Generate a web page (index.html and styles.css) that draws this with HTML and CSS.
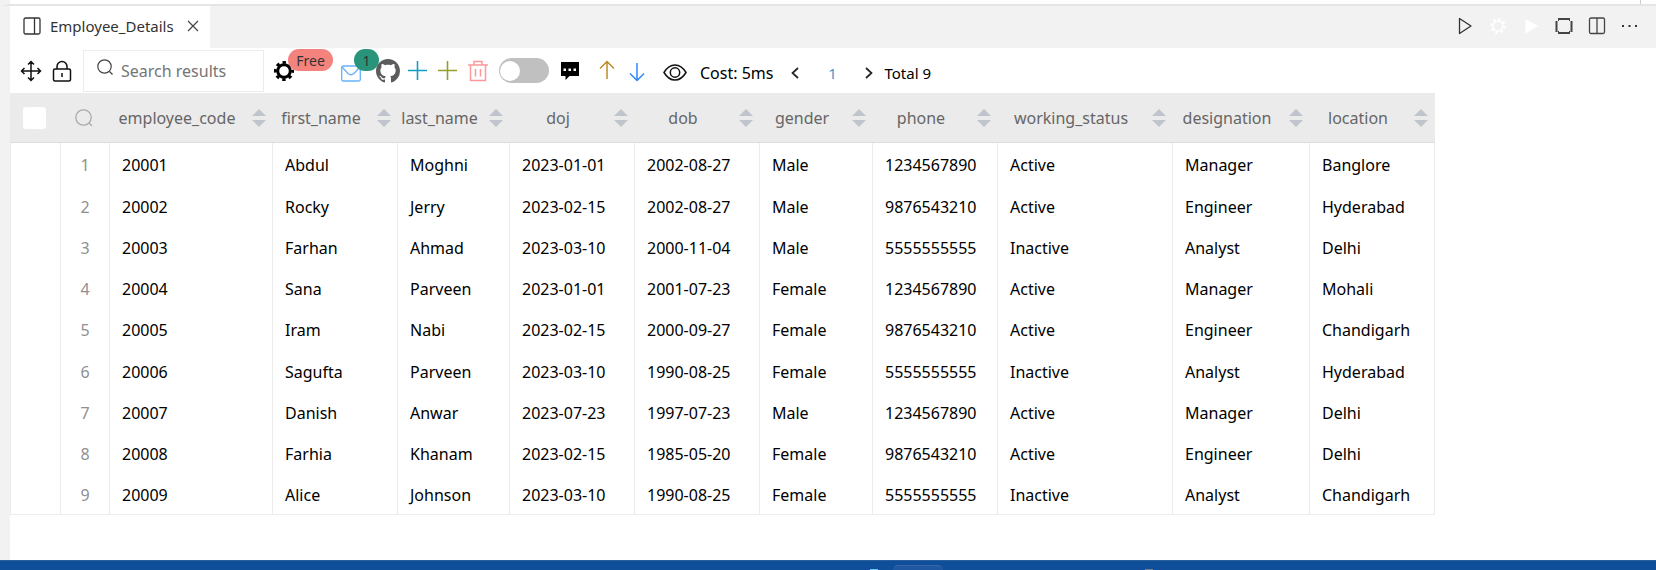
FILE: index.html
```
<!DOCTYPE html>
<html lang="en">
<head>
<meta charset="utf-8">
<title>Employee_Details</title>
<link rel="stylesheet" href="styles.css">
</head>
<body>
<div class="top-strip"><span class="top-divider"></span></div>
<main class="workspace">
  <header class="tabbar">
    <div class="tab">
      <svg class="tab-icon" width="18" height="18" viewBox="0 0 18 18" fill="none" stroke="#333" stroke-width="1.3"><rect x="1" y="1" width="16" height="16" rx="1.5"/><path d="M11.500 1v16"/></svg>
      <span class="tab-title">Employee_Details</span>
      <button class="icon-btn" type="button" aria-label="Close tab"><svg width="12" height="12" viewBox="0 0 12 12" fill="none" stroke="#444" stroke-width="1.2"><path d="M1 1l10 10M11 1L1 11"/></svg></button>
    </div>
    <div class="tab-actions">
      <button class="icon-btn" type="button" aria-label="Run"><svg width="18" height="18" viewBox="0 0 18 18" fill="none" stroke="#333" stroke-width="1.3" stroke-linejoin="round"><path d="M3.500 1.500v15L15 9z"/></svg></button>
      <button class="icon-btn" type="button" aria-label="Settings"><svg width="18" height="18" viewBox="0 0 18 18" fill="none" stroke="#fff"><circle cx="9" cy="9" r="5" stroke-width="1.500"/><circle cx="9" cy="9" r="6.700" stroke-width="2.200" stroke-dasharray="2.600 2.660"/></svg></button>
      <button class="icon-btn" type="button" aria-label="Execute"><svg width="18" height="18" viewBox="0 0 18 18" fill="#fff"><path d="M3.500 2v14.500L16 9z"/></svg></button>
      <button class="icon-btn" type="button" aria-label="Frame"><svg width="18" height="18" viewBox="0 0 18 18" fill="none" stroke="#444" stroke-width="2"><path d="M3 2h12M3 16h12M1.500 4v11M16.500 4v11"/><path d="M3.500 3v1M14.500 3v1M3.500 14v1M14.500 14v1" stroke-width="1"/></svg></button>
      <button class="icon-btn" type="button" aria-label="Split editor"><svg width="18" height="18" viewBox="0 0 18 18" fill="none" stroke="#444" stroke-width="1.300"><rect x="1.500" y="1" width="15" height="15.500" rx="1.500"/><path d="M9 1v15.500"/></svg></button>
      <button class="icon-btn" type="button" aria-label="More"><svg width="18" height="18" viewBox="0 0 18 18" fill="#333"><rect x="1" y="8" width="2" height="2"/><rect x="7.500" y="8" width="2" height="2"/><rect x="14" y="8" width="2" height="2"/></svg></button>
    </div>
  </header>

  <section class="toolbar">
    <button class="icon-btn" type="button" aria-label="Move"><svg width="22" height="22" viewBox="0 0 22 22" fill="none" stroke="#111" stroke-width="1.500"><path d="M1.500 11h19M11 1.500v19M4.500 8l-3 3 3 3M17.500 8l3 3-3 3M8 4.500l3-3 3 3M8 17.500l3 3 3-3"/></svg></button>
    <button class="icon-btn" type="button" aria-label="Lock"><svg width="20" height="22" viewBox="0 0 20 22" fill="none" stroke="#111" stroke-width="1.500"><rect x="1.500" y="9" width="17" height="12" rx="1.500"/><path d="M5 9V6.500a5 5 0 0 1 10 0V9M10 13v4"/></svg></button>
    <label class="search">
      <svg width="16" height="17" viewBox="0 0 16 17" fill="none" stroke="#444" stroke-width="1.200"><circle cx="7.500" cy="7.500" r="6.700"/><path d="M12.500 12.500l3 3"/></svg>
      <input class="search-input" type="text" placeholder="Search results" aria-label="Search results">
    </label>
    <button class="icon-btn badged" type="button" aria-label="Free plan settings"><svg width="20" height="20" viewBox="0 0 20 20" fill="none" stroke="#000"><circle cx="10" cy="10" r="6.300" stroke-width="3"/><circle cx="10" cy="10" r="8.600" stroke-width="2.800" stroke-dasharray="3.400 3.355" stroke-dashoffset="1.700"/></svg><span class="badge badge-free">Free</span></button>
    <button class="icon-btn badged mail" type="button" aria-label="Messages"><svg width="20" height="20" viewBox="0 0 20 20" fill="none" stroke="#66b1ff" stroke-width="1.300"><rect x=".7" y="5" width="18.600" height="15" rx="1.500"/><path d="M1 6l6 6.500q3 2.500 6 0L19 6"/></svg><span class="badge badge-count">1</span></button>
    <button class="icon-btn github" type="button" aria-label="GitHub"><svg width="24" height="24" viewBox="0 0 16 16" fill="#5c5c5c"><path d="M8 0C3.580 0 0 3.580 0 8c0 3.540 2.290 6.530 5.470 7.590.4.070.55-.17.55-.38 0-.19-.01-.82-.01-1.490-2.010.37-2.530-.49-2.690-.94-.09-.23-.48-.94-.82-1.130-.28-.15-.68-.52-.01-.53.63-.01 1.080.58 1.230.82.72 1.210 1.870.87 2.330.66.070-.52.28-.87.51-1.070-1.780-.2-3.640-.89-3.640-3.950 0-.87.31-1.590.82-2.150-.08-.2-.36-1.020.08-2.120 0 0 .67-.21 2.200.82.64-.18 1.320-.27 2-.27s1.360.09 2 .27c1.530-1.040 2.200-.82 2.200-.82.44 1.100.16 1.920.08 2.120.51.56.82 1.270.82 2.150 0 3.070-1.870 3.750-3.650 3.950.29.25.54.73.54 1.480 0 1.070-.01 1.930-.01 2.200 0 .21.15.46.55.38A8.010 8.010 0 0 0 16 8c0-4.420-3.580-8-8-8z"/></svg></button>
    <button class="icon-btn" type="button" aria-label="Insert row"><svg width="20" height="20" viewBox="0 0 20 20" stroke="#109fc6" stroke-width="1.600"><path d="M0 9.500h19M9.500 0v19"/></svg></button>
    <button class="icon-btn" type="button" aria-label="Add column"><svg width="20" height="20" viewBox="0 0 20 20" stroke="#94a02a" stroke-width="1.600"><path d="M0 9.500h19M9.500 0v19"/></svg></button>
    <button class="icon-btn" type="button" aria-label="Delete"><svg width="20" height="22" viewBox="0 0 20 22" fill="none" stroke="#f99" stroke-width="1.500"><path d="M0 5h20M6 5V1.500h8V5M2.500 5v15.500h15V5M7.500 9v7.500M12.500 9v7.500"/></svg></button>
    <input class="switch" type="checkbox" role="switch" aria-label="Read only">
    <button class="icon-btn chat" type="button" aria-label="Comment"><svg width="18" height="20" viewBox="0 0 18 20"><path d="M0 1h18v14H8.500L4.500 19v-4H0z" fill="#000"/><path d="M2.500 7.500h2.500v2.500H2.500zM7.500 7.500H10v2.500H7.500zM12.500 7.500H15v2.500h-2.500z" fill="#fff"/></svg></button>
    <button class="icon-btn export" type="button" aria-label="Move up"><svg width="20" height="20" viewBox="0 0 20 20" fill="none" stroke="#bd8a28" stroke-width="1.500"><path d="M10 .5V18M3 7.500l7-7 7 7"/></svg></button>
    <button class="icon-btn" type="button" aria-label="Move down"><svg width="20" height="20" viewBox="0 0 20 20" fill="none" stroke="#2f86ff" stroke-width="1.500"><path d="M10 2v17.500M3 12.500l7 7 7-7"/></svg></button>
    <button class="icon-btn eye" type="button" aria-label="View"><svg width="24" height="18" viewBox="0 0 24 18" fill="none" stroke="#111" stroke-width="1.500"><path d="M1 10.500Q5.500 3 12 3t11 7.500Q18.500 18 12 18T1 10.500z"/><circle cx="12" cy="10.500" r="4.700"/></svg></button>
    <span class="cost">Cost: 5ms</span>
    <nav class="pager" aria-label="Pages">
      <button class="icon-btn" type="button" aria-label="Previous page"><svg width="8" height="12" viewBox="0 0 8 12" fill="none" stroke="#222" stroke-width="1.700"><path d="M7 1L1.500 6 7 11"/></svg></button>
      <button class="page" type="button">1</button>
      <button class="icon-btn" type="button" aria-label="Next page"><svg width="8" height="12" viewBox="0 0 8 12" fill="none" stroke="#222" stroke-width="1.700"><path d="M1 1l5.500 5L1 11"/></svg></button>
      <span class="total">Total 9</span>
    </nav>
  </section>

  <table class="grid">
    <colgroup><col class="w-check"><col class="w-index"><col class="w-code"><col class="w-mid"><col class="w-last"><col class="w-mid"><col class="w-mid"><col class="w-gender"><col class="w-mid"><col class="w-status"><col class="w-role"><col class="w-mid"></colgroup>
    <thead>
      <tr>
        <th class="center"><input class="check" type="checkbox" aria-label="Select all rows"></th>
        <th class="center"><svg class="find" width="18" height="18" viewBox="0 0 18 18" fill="none" stroke="#aaa" stroke-width="1.300"><circle cx="8.500" cy="8.500" r="7.700"/><path d="M14 14l3 3"/></svg></th>
        <th><span class="name">employee_code</span><button class="sort" type="button" aria-label="Sort"></button></th>
        <th><span class="name">first_name</span><button class="sort" type="button" aria-label="Sort"></button></th>
        <th><span class="name">last_name</span><button class="sort" type="button" aria-label="Sort"></button></th>
        <th><span class="name">doj</span><button class="sort" type="button" aria-label="Sort"></button></th>
        <th><span class="name">dob</span><button class="sort" type="button" aria-label="Sort"></button></th>
        <th><span class="name">gender</span><button class="sort" type="button" aria-label="Sort"></button></th>
        <th><span class="name">phone</span><button class="sort" type="button" aria-label="Sort"></button></th>
        <th><span class="name">working_status</span><button class="sort" type="button" aria-label="Sort"></button></th>
        <th><span class="name">designation</span><button class="sort" type="button" aria-label="Sort"></button></th>
        <th><span class="name">location</span><button class="sort" type="button" aria-label="Sort"></button></th>
      </tr>
    </thead>
    <tbody>
      <tr><td></td><td class="index">1</td><td>20001</td><td>Abdul</td><td>Moghni</td><td>2023-01-01</td><td>2002-08-27</td><td>Male</td><td>1234567890</td><td>Active</td><td>Manager</td><td>Banglore</td></tr>
      <tr><td></td><td class="index">2</td><td>20002</td><td>Rocky</td><td>Jerry</td><td>2023-02-15</td><td>2002-08-27</td><td>Male</td><td>9876543210</td><td>Active</td><td>Engineer</td><td>Hyderabad</td></tr>
      <tr><td></td><td class="index">3</td><td>20003</td><td>Farhan</td><td>Ahmad</td><td>2023-03-10</td><td>2000-11-04</td><td>Male</td><td>5555555555</td><td>Inactive</td><td>Analyst</td><td>Delhi</td></tr>
      <tr><td></td><td class="index">4</td><td>20004</td><td>Sana</td><td>Parveen</td><td>2023-01-01</td><td>2001-07-23</td><td>Female</td><td>1234567890</td><td>Active</td><td>Manager</td><td>Mohali</td></tr>
      <tr><td></td><td class="index">5</td><td>20005</td><td>Iram</td><td>Nabi</td><td>2023-02-15</td><td>2000-09-27</td><td>Female</td><td>9876543210</td><td>Active</td><td>Engineer</td><td>Chandigarh</td></tr>
      <tr><td></td><td class="index">6</td><td>20006</td><td>Sagufta</td><td>Parveen</td><td>2023-03-10</td><td>1990-08-25</td><td>Female</td><td>5555555555</td><td>Inactive</td><td>Analyst</td><td>Hyderabad</td></tr>
      <tr><td></td><td class="index">7</td><td>20007</td><td>Danish</td><td>Anwar</td><td>2023-07-23</td><td>1997-07-23</td><td>Male</td><td>1234567890</td><td>Active</td><td>Manager</td><td>Delhi</td></tr>
      <tr><td></td><td class="index">8</td><td>20008</td><td>Farhia</td><td>Khanam</td><td>2023-02-15</td><td>1985-05-20</td><td>Female</td><td>9876543210</td><td>Active</td><td>Engineer</td><td>Delhi</td></tr>
      <tr><td></td><td class="index">9</td><td>20009</td><td>Alice</td><td>Johnson</td><td>2023-03-10</td><td>1990-08-25</td><td>Female</td><td>5555555555</td><td>Inactive</td><td>Analyst</td><td>Chandigarh</td></tr>
    </tbody>
  </table>
</main>
<footer class="taskbar"><span class="dot dot-blue"></span><span class="active-app"></span><span class="dot dot-gray"></span></footer>
</body>
</html>
```

FILE: styles.css
```
* { box-sizing: border-box; }

body {
  margin: 0;
  min-height: 100vh;
  display: flex;
  flex-direction: column;
  background: #fff;
  color: #000;
  font-family: "Noto Sans", "Open Sans", sans-serif;
  font-size: 16px;
  overflow: hidden;
}

button {
  padding: 0;
  border: 0;
  background: none;
  font: inherit;
  color: inherit;
}

svg { display: block; overflow: visible; }

.top-strip {
  display: flex;
  justify-content: flex-end;
  height: 6px;
  padding-right: 15px;
  border-bottom: 2px solid #e5e5e5;
  border-left: 10px solid #f2f2f2;
}

.top-divider { width: 1px; background: #ccc; }

.workspace {
  flex: 1;
  border-left: 10px solid #f2f2f2;
}

.tabbar {
  display: flex;
  justify-content: space-between;
  height: 42px;
  background: #f2f2f2;
}

.tab {
  display: flex;
  align-items: center;
  padding: 0 11px 2px 13px;
  background: #fff;
  color: #333;
  font-size: 15px;
}

.tab-title { margin: 0 13px 0 9px; }

.tab-actions {
  display: flex;
  align-items: center;
  gap: 15px;
  padding: 0 17px 2px 0;
}

.toolbar {
  display: flex;
  align-items: center;
  gap: 10px;
  height: 45px;
  padding-left: 10px;
}

.icon-btn { flex: none; }

.search {
  display: flex;
  align-items: center;
  gap: 8px;
  width: 181px;
  height: 42px;
  margin-left: 1px;
  padding: 0 13px;
  border: 1px solid #ececec;
}

.search svg { flex: none; margin-bottom: 6px; }

.search-input {
  width: 100%;
  min-width: 0;
  padding: 0;
  border: 0;
  outline: 0;
  background: none;
  font: inherit;
}

.search-input::placeholder { color: #757575; opacity: 1; }

.badged { position: relative; }

.badge {
  position: absolute;
  top: -12px;
  height: 22px;
  border-radius: 11px;
  color: #333;
  font-size: 14px;
  line-height: 24px;
  text-align: center;
}

.badge-free { left: 14px; width: 45px; background: #f4837d; }
.badge-count { left: 13px; width: 25px; background: #2a947b; }

.mail { margin-left: 37px; }
.github { width: 22px; margin-left: 5px; }

.switch {
  appearance: none;
  flex: none;
  display: flex;
  align-items: center;
  width: 50px;
  height: 25px;
  margin: 0 0 0 1px;
  padding: 0 1px;
  border-radius: 13px;
  background: #c0c0c0;
}

.switch::before {
  content: "";
  width: 20px;
  height: 20px;
  border-radius: 50%;
  background: #fff;
}

.chat { margin-left: 2px; }
.export { margin-left: 8px; }
.eye { margin-left: 6px; }
.cost { margin-left: 3px; padding-top: 4px; line-height: 24px; }

.pager {
  display: flex;
  align-items: center;
  margin-left: 8px;
  padding-top: 4px;
  font-size: 15px;
}

.page { width: 66px; color: #409bc8; }
.total { margin-left: 11px; }

.grid {
  table-layout: fixed;
  width: 1425px;
  border-collapse: separate;
  border-spacing: 0;
}

.w-check { width: 51px; }
.w-index { width: 49px; }
.w-code { width: 163px; }
.w-mid { width: 125px; }
.w-last { width: 112px; }
.w-gender { width: 113px; }
.w-status { width: 175px; }
.w-role { width: 137px; }

.grid th {
  position: relative;
  height: 50px;
  padding: 0 29px 0 0;
  border-bottom: 1px solid #dcdcdc;
  background: #ebebeb;
  color: #666;
  font-weight: 400;
}

.grid th.center { padding: 0 3px 0 0; }

.find { margin: 0 auto; }

.name {
  display: block;
  height: 20px;
  line-height: 21px;
  overflow: hidden;
  white-space: nowrap;
}

.check {
  appearance: none;
  display: block;
  width: 23px;
  height: 22px;
  margin: 0 auto;
  border-radius: 3px;
  background: #fff;
}

.sort {
  position: absolute;
  top: 16px;
  right: 7px;
  display: grid;
  gap: 4px;
}

.sort::before,
.sort::after {
  content: "";
  border: 7px solid transparent;
}

.sort::before { border-top: 0; border-bottom-color: #c0c4cc; }
.sort::after { border-bottom: 0; border-top-color: #c0c4cc; }

.grid td {
  height: 41px;
  padding: 2px 0 0 12px;
  border-right: 1px solid #ececec;
  white-space: nowrap;
}

.grid tr:nth-child(4n+1) td { height: 42px; }
.grid td:first-child { border-left: 1px solid #ececec; }
.grid tbody tr:last-child td { border-bottom: 1px solid #ececec; }

.grid .index {
  padding: 2px 0 0;
  color: #909090;
  text-align: center;
}

.taskbar {
  display: flex;
  align-items: flex-end;
  height: 10px;
  padding-left: 870px;
  border-top: 1px solid #2b5f9c;
  background: #0f4e98;
  overflow: hidden;
}

.active-app {
  width: 50px;
  height: 5px;
  margin: 0 202px 0 15px;
  border-top: 1px solid #3468a8;
  border-radius: 5px 5px 0 0;
  background: #1f58a0;
}

.dot { width: 8px; height: 1px; }
.dot-blue { background: #6cc4f5; }
.dot-gray { background: #77808c; }
```
